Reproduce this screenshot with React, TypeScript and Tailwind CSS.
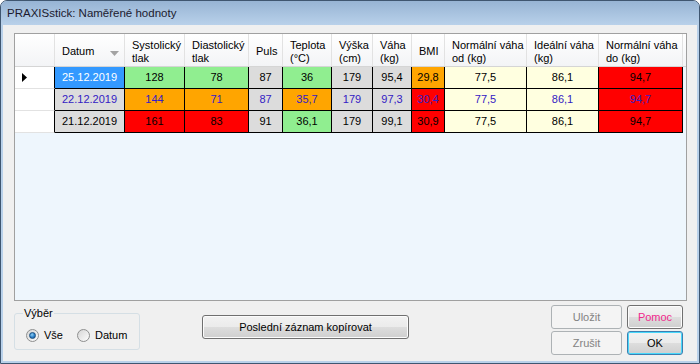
import React from 'react';

type Col = { title: string[]; w: string; sort?: boolean };

const COLUMNS: Col[] = [
  { title: ['Datum'], w: 'w-[70px]', sort: true },
  { title: ['Systolický', 'tlak'], w: 'w-[60px]' },
  { title: ['Diastolický', 'tlak'], w: 'w-[64px]' },
  { title: ['Puls'], w: 'w-[34px]' },
  { title: ['Teplota', '(°C)'], w: 'w-[49px]' },
  { title: ['Výška', '(cm)'], w: 'w-[41px]' },
  { title: ['Váha', '(kg)'], w: 'w-[39px]' },
  { title: ['BMI'], w: 'w-[33px]' },
  { title: ['Normální váha', 'od (kg)'], w: 'w-[82px]' },
  { title: ['Ideální váha', '(kg)'], w: 'w-[72px]' },
  { title: ['Normální váha', 'do (kg)'], w: 'w-[84px]' },
];

// background per cell: g = green, o = orange, r = red, s = gray, y = light yellow, b = selected
const BG: Record<string, string> = {
  g: 'bg-[#90ee90]',
  o: 'bg-[#ffa500]',
  r: 'bg-[#ff0000]',
  s: 'bg-[#dcdcdc]',
  y: 'bg-[#ffffe0]',
  b: 'bg-[#3399ff]',
};

const ROWS: { values: string[]; colors: string[]; text: string; current?: boolean }[] = [
  {
    values: ['25.12.2019', '128', '78', '87', '36', '179', '95,4', '29,8', '77,5', '86,1', '94,7'],
    colors: ['b', 'g', 'g', 's', 'g', 's', 's', 'o', 'y', 'y', 'r'],
    text: 'text-black',
    current: true,
  },
  {
    values: ['22.12.2019', '144', '71', '87', '35,7', '179', '97,3', '30,4', '77,5', '86,1', '94,7'],
    colors: ['s', 'o', 'o', 's', 'o', 's', 's', 'r', 'y', 'y', 'r'],
    text: 'text-[#3320c4]',
  },
  {
    values: ['21.12.2019', '161', '83', '91', '36,1', '179', '99,1', '30,9', '77,5', '86,1', '94,7'],
    colors: ['s', 'r', 'r', 's', 'g', 's', 's', 'r', 'y', 'y', 'r'],
    text: 'text-black',
  },
];

const HeaderRow: React.FC = () => (
  <div className="flex h-[33px] bg-linear-to-b from-white to-[#f3f4f6] border-b border-[#d5d5d5]">
    <div className="w-[40px] h-full border-r border-[#e2e2e2]" />
    {COLUMNS.map((c, i) => (
      <div
        key={i}
        className={`${c.w} h-full border-r border-[#e2e2e2] flex items-center pl-[7px] pt-[3px] leading-[13px] relative`}
      >
        <div className="flex flex-col">
          {c.title.map((t, j) => (
            <span key={j} className="whitespace-nowrap">{t}</span>
          ))}
        </div>
        {c.sort && (
          <svg className="absolute right-[5px] top-[17px]" width="9" height="5" viewBox="0 0 9 5">
            <polygon points="0,0 9,0 4.5,5" fill="#a3a3a3" />
          </svg>
        )}
      </div>
    ))}
  </div>
);

const DataRow: React.FC<{ row: (typeof ROWS)[number] }> = ({ row }) => (
  <div className="flex h-[22px]">
    <div className="w-[40px] h-full bg-white border-b border-[#e2e2e2] border-r border-r-black flex items-center pl-[7px]">
      {row.current && (
        <svg width="5" height="9" viewBox="0 0 5 9">
          <polygon points="0,0 5,4.5 0,9" fill="#000" />
        </svg>
      )}
    </div>
    {row.values.map((v, i) => {
      const sel = row.colors[i] === 'b';
      return (
        <div
          key={i}
          className={`${COLUMNS[i].w} h-full border-r border-b border-black flex items-center justify-center ${BG[row.colors[i]]} ${sel ? 'text-white' : row.text}`}
        >
          {v}
        </div>
      );
    })}
  </div>
);

const Radio: React.FC<{ checked?: boolean }> = ({ checked }) => (
  <div className="w-[13px] h-[13px] rounded-full border border-[#8e8f8f] bg-linear-to-br from-[#d6d6d6] to-[#fdfdfd] flex items-center justify-center">
    {checked && (
      <div className="w-[7px] h-[7px] rounded-full bg-[radial-gradient(circle_at_40%_35%,#8fd0f5_0%,#2a7fc8_55%,#174b86_100%)] border border-[#1a4f80]" />
    )}
  </div>
);

const WinButton: React.FC<{
  label: string;
  className: string;
  disabled?: boolean;
  isDefault?: boolean;
  textClass?: string;
}> = ({ label, className, disabled, isDefault, textClass }) => {
  if (disabled) {
    return (
      <div className={`${className} h-[24px] rounded-[3px] border border-[#adb2b5] bg-[#f4f4f4] text-[#838383] flex items-center justify-center`}>
        {label}
      </div>
    );
  }
  return (
    <div
      className={`${className} h-[24px] rounded-[3px] border ${
        isDefault ? 'border-[#3c7fb1] shadow-[inset_0_0_0_1px_#48d8fb]' : 'border-[#707070] shadow-[inset_0_0_0_1px_#fcfcfc]'
      } bg-[linear-gradient(#f2f2f2_0%,#ebebeb_50%,#dddddd_51%,#cfcfcf_100%)] flex items-center justify-center ${textClass ?? 'text-black'}`}
    >
      {label}
    </div>
  );
};

const App: React.FC = () => {
  return (
    <div className="w-[700px] h-[364px] flex flex-col bg-[#b9d1ea] border border-[#3f5670] rounded-t-[7px] overflow-hidden font-['Liberation_Sans',Arial,sans-serif] text-[11px] text-black">
      {/* title bar */}
      <div className="h-[24px] shrink-0 bg-linear-to-b from-[#97b4d4] to-[#b9d1ea] flex items-center pl-[6px] pt-[1px]">
        <span className="text-[11.5px] text-[#1c1a2e]">PRAXISstick: Naměřené hodnoty</span>
      </div>

      {/* client area */}
      <div className="flex-1 mx-[2px] mb-[2px] bg-[#f0f0f0] pl-[11px] pr-[10px] pt-[8px] flex flex-col">
        <div className="w-[673px] h-[268px] border border-[#a0a0a0] bg-[#eef6fd] shrink-0">
          <HeaderRow />
          {ROWS.map((r, i) => (
            <DataRow key={i} row={r} />
          ))}
        </div>

        <div className="flex items-start mt-[4px]">
          <fieldset className="w-[126px] mt-[2px] border border-[#d5dfe5] rounded-[3px] px-[8px] pb-[7px]">
            <legend className="px-[1px] leading-[13px]">Výběr</legend>
            <div className="flex items-center h-[13px] pl-[3px] mt-[9px]">
              <Radio checked />
              <span className="ml-[5px]">Vše</span>
              <div className="ml-[14px]">
                <Radio />
              </div>
              <span className="ml-[5px]">Datum</span>
            </div>
          </fieldset>

          <div className="ml-[62px] mt-[10px]">
            <WinButton label="Poslední záznam kopírovat" className="w-[207px]" />
          </div>

          <div className="ml-auto mr-[4px] grid grid-cols-[71px_56px] gap-x-[5px] gap-y-[2px]">
            <WinButton label="Uložit" className="w-[71px]" disabled />
            <WinButton label="Pomoc" className="w-[56px]" textClass="text-[#f0288c]" />
            <WinButton label="Zrušit" className="w-[71px]" disabled />
            <WinButton label="OK" className="w-[56px]" isDefault />
          </div>
        </div>
      </div>
    </div>
  );
};

export default App;
